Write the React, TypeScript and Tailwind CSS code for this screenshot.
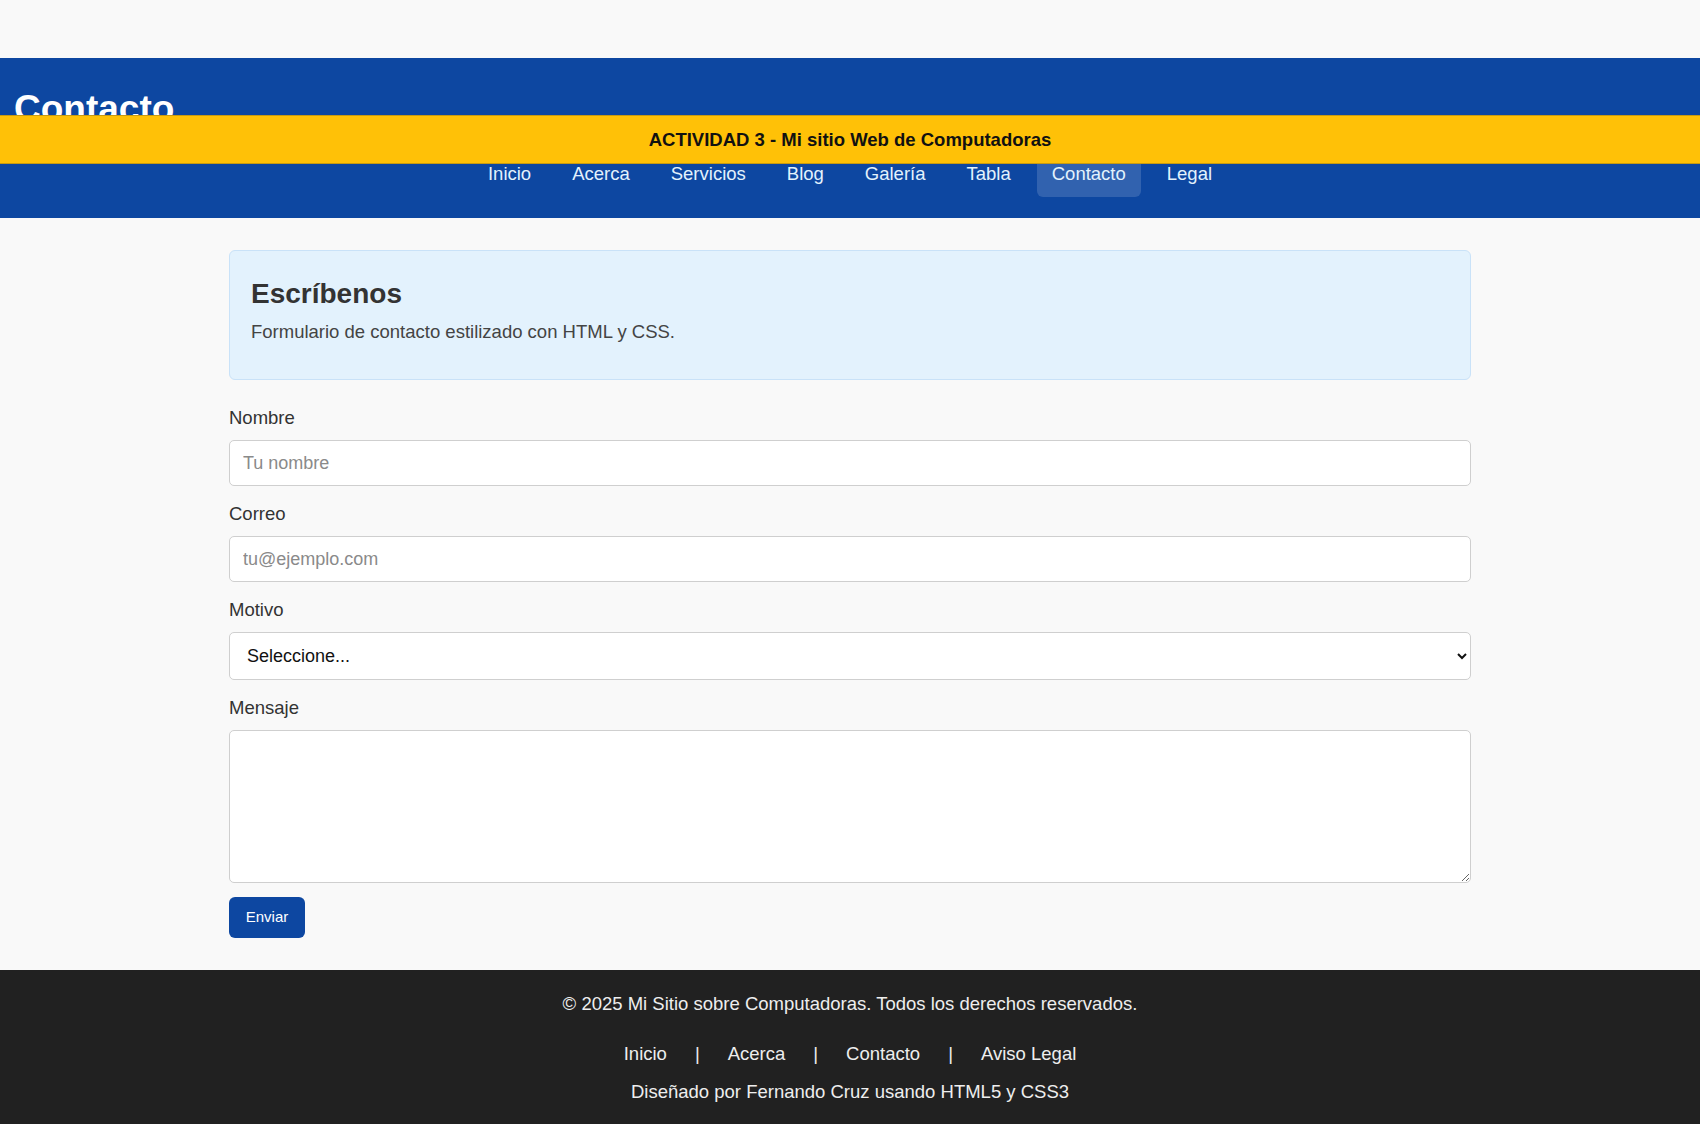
import { useState } from "react";

const navLinks = ["Inicio", "Acerca", "Servicios", "Blog", "Galería", "Tabla", "Contacto", "Legal"];
const footerLinks = ["Inicio", "Acerca", "Contacto", "Aviso Legal"];

function Field({ label, children }: any) {
  return (
    <div className="mb-[17px]">
      <label className="block text-[18.5px] leading-[22px] text-[#333] mb-[11px]">{label}</label>
      {children}
    </div>
  );
}

export default function App() {
  const [motivo, setMotivo] = useState("");

  return (
    <div className="min-h-screen bg-[#f9f9f9] font-['Liberation_Sans',Arial,sans-serif]">
      <div className="h-[58px]" />

      <header className="bg-[#0d47a1]">
        <div className="h-[57px] overflow-hidden pt-[30px] pl-[14px]">
          <h1 className="text-[37px] leading-[41px] font-bold text-white">Contacto</h1>
        </div>
        <div className="h-[49px] bg-[#ffc107] border-y border-[#c79a12] flex items-center justify-center">
          <p className="text-[18.5px] font-bold text-[#111]">ACTIVIDAD 3 - Mi sitio Web de Computadoras</p>
        </div>
        <nav className="h-[54px] flex justify-center gap-[11px]">
          {navLinks.map((l) => (
            <a
              key={l}
              href="#"
              className={
                "h-[33px] px-[15px] text-[18.5px] leading-[19px] text-[#e3f2fd] rounded-b-md " +
                (l === "Contacto" ? "bg-white/15" : "")
              }
            >
              {l}
            </a>
          ))}
        </nav>
      </header>

      <main className="w-[1242px] mx-auto pt-[32px] pb-[32px]">
        <section className="bg-[#e3f2fd] border border-[#c9e2f8] rounded-md pl-[21px] pr-5 pt-[27px] pb-[37px] mb-[27px]">
          <h2 className="text-[28px] leading-[32px] font-bold text-[#333]">Escríbenos</h2>
          <p className="mt-[11px] text-[18.5px] leading-[21px] text-[#444]">
            Formulario de contacto estilizado con HTML y CSS.
          </p>
        </section>

        <form onSubmit={(e) => e.preventDefault()}>
          <Field label="Nombre">
            <input
              type="text"
              placeholder="Tu nombre"
              className="block w-full h-[46px] bg-white border border-[#cfcfcf] rounded-[5px] px-[13px] text-[18px] text-[#222] placeholder:text-[#8a8a8a] outline-none"
            />
          </Field>
          <Field label="Correo">
            <input
              type="email"
              placeholder="tu@ejemplo.com"
              className="block w-full h-[46px] bg-white border border-[#cfcfcf] rounded-[5px] px-[13px] text-[18px] text-[#222] placeholder:text-[#8a8a8a] outline-none"
            />
          </Field>
          <Field label="Motivo">
            <select
              value={motivo}
              onChange={(e) => setMotivo(e.target.value)}
              className="block w-full h-[48px] bg-white border border-[#cfcfcf] rounded-[5px] pl-[13px] pr-[8px] text-[18px] text-[#111] outline-none"
            >
              <option value="">Seleccione...</option>
              <option value="consulta">Consulta</option>
              <option value="soporte">Soporte</option>
              <option value="otro">Otro</option>
            </select>
          </Field>
          <div>
            <label className="block text-[18.5px] leading-[22px] text-[#333] mb-[11px]">Mensaje</label>
            <textarea className="block w-full h-[153px] bg-white border border-[#cfcfcf] rounded-[5px] px-[13px] py-2 text-[18px] outline-none" />
          </div>
          <button
            type="submit"
            className="mt-[14px] w-[76px] h-[41px] bg-[#0d47a1] text-white text-[15px] rounded-md"
          >
            Enviar
          </button>
        </form>
      </main>

      <footer className="bg-[#212121] text-[#eee] text-center pt-[19px] pb-[30px] text-[18.5px]">
        <p className="leading-[29px]">© 2025 Mi Sitio sobre Computadoras. Todos los derechos reservados.</p>
        <div className="mt-[21px] flex justify-center items-center gap-[28px] leading-[29px]">
          {footerLinks.map((l, i) => (
            <span key={l} className="flex items-center gap-[28px]">
              {i > 0 && <span>|</span>}
              <a href="#" className="text-[#eee]">{l}</a>
            </span>
          ))}
        </div>
        <p className="mt-[9px] leading-[29px]">Diseñado por Fernando Cruz usando HTML5 y CSS3</p>
      </footer>
    </div>
  );
}
